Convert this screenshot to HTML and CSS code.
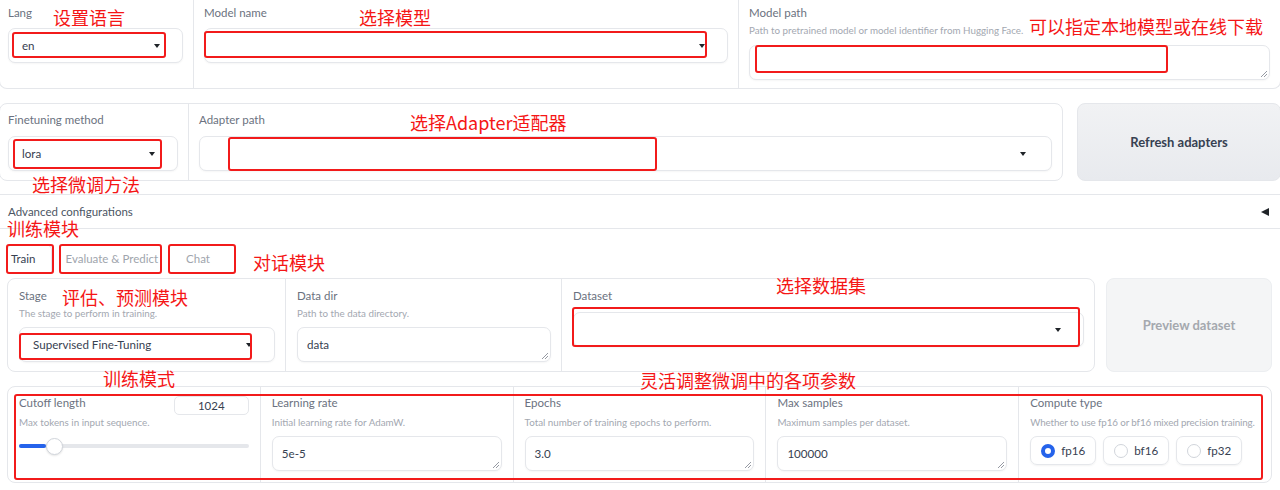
FILE: index.html
```html
<!DOCTYPE html>
<html lang="en">
<head>
<meta charset="utf-8">
<title>LLaMA Board</title>
<link rel="stylesheet" href="styles.css">
</head>
<body>
<div class="page">
  <div class="row1">
    <div class="cell c-lang">
      <div class="lbl">Lang</div>
      <div class="select"><span class="val">en</span><span class="arrow"></span></div>
    </div>
    <div class="cell c-mname">
      <div class="lbl">Model name</div>
      <div class="select"><span class="val"></span><span class="arrow"></span></div>
    </div>
    <div class="cell c-mpath">
      <div class="lbl">Model path</div>
      <div class="desc">Path to pretrained model or model identifier from Hugging Face.</div>
      <div class="textarea tall"><span class="val"></span><svg class="grip" width="7" height="7" viewBox="0 0 7 7"><path d="M7 1L1 7M7 4L4 7" stroke="#8a8f98" stroke-width="0.9"/></svg></div>
    </div>
  </div>

  <div class="row2">
    <div class="group g2">
      <div class="cell c-ft">
        <div class="lbl">Finetuning method</div>
        <div class="select"><span class="val">lora</span><span class="arrow"></span></div>
      </div>
      <div class="cell c-adapter">
        <div class="lbl">Adapter path</div>
        <div class="select wide-arrow"><span class="val"></span><span class="arrow"></span></div>
      </div>
    </div>
    <div class="btn btn-refresh">Refresh adapters</div>
  </div>

  <div class="accordion">
    <span>Advanced configurations</span>
    <span class="tri"></span>
  </div>

  <div class="tabs">
    <div class="tab active">Train</div>
    <div class="tab">Evaluate &amp; Predict</div>
    <div class="tab">Chat</div>
  </div>

  <div class="tabbody">
    <div class="row3">
      <div class="group g3">
        <div class="cell c-stage">
          <div class="lbl">Stage</div>
          <div class="desc">The stage to perform in training.</div>
          <div class="select"><span class="val">Supervised Fine-Tuning</span><span class="arrow"></span></div>
        </div>
        <div class="cell c-ddir">
          <div class="lbl">Data dir</div>
          <div class="desc">Path to the data directory.</div>
          <div class="textarea"><span class="val">data</span><svg class="grip" width="7" height="7" viewBox="0 0 7 7"><path d="M7 1L1 7M7 4L4 7" stroke="#8a8f98" stroke-width="0.9"/></svg></div>
        </div>
        <div class="cell c-dataset">
          <div class="lbl">Dataset</div>
          <div class="select ds"><span class="val"></span><span class="arrow"></span></div>
        </div>
      </div>
      <div class="btn btn-preview">Preview dataset</div>
    </div>

    <div class="group params">
      <div class="cell pc">
        <div class="lbl-row">
          <div class="lbl">Cutoff length</div>
          <div class="num">1024</div>
        </div>
        <div class="desc">Max tokens in input sequence.</div>
        <div class="slider">
          <div class="track"><div class="fill" style="width:27px"></div></div>
          <div class="thumb"></div>
        </div>
      </div>
      <div class="cell pc">
        <div class="lbl-row"><div class="lbl">Learning rate</div></div>
        <div class="desc">Initial learning rate for AdamW.</div>
        <div class="textarea"><span class="val">5e-5</span><svg class="grip" width="7" height="7" viewBox="0 0 7 7"><path d="M7 1L1 7M7 4L4 7" stroke="#8a8f98" stroke-width="0.9"/></svg></div>
      </div>
      <div class="cell pc">
        <div class="lbl-row"><div class="lbl">Epochs</div></div>
        <div class="desc">Total number of training epochs to perform.</div>
        <div class="textarea"><span class="val">3.0</span><svg class="grip" width="7" height="7" viewBox="0 0 7 7"><path d="M7 1L1 7M7 4L4 7" stroke="#8a8f98" stroke-width="0.9"/></svg></div>
      </div>
      <div class="cell pc">
        <div class="lbl-row"><div class="lbl">Max samples</div></div>
        <div class="desc">Maximum samples per dataset.</div>
        <div class="textarea"><span class="val">100000</span><svg class="grip" width="7" height="7" viewBox="0 0 7 7"><path d="M7 1L1 7M7 4L4 7" stroke="#8a8f98" stroke-width="0.9"/></svg></div>
      </div>
      <div class="cell pc">
        <div class="lbl-row"><div class="lbl">Compute type</div></div>
        <div class="desc tight">Whether to use fp16 or bf16 mixed precision training.</div>
        <div class="radios">
          <div class="radio"><span class="dot on"></span><span>fp16</span></div>
          <div class="radio"><span class="dot"></span><span>bf16</span></div>
          <div class="radio"><span class="dot"></span><span>fp32</span></div>
        </div>
      </div>
    </div>
  </div>

  <div class="annot">
    <div class="box b-lang"></div>
    <div class="box b-mname"></div>
    <div class="box b-mpath"></div>
    <div class="box b-ft"></div>
    <div class="box b-adapter"></div>
    <div class="box b-train"></div>
    <div class="box b-eval"></div>
    <div class="box b-chat"></div>
    <div class="box b-stage"></div>
    <div class="box b-dataset"></div>
    <div class="box b-params"></div>

    <div class="note n1">设置语言</div>
    <div class="note n2">选择模型</div>
    <div class="note n3">可以指定本地模型或在线下载</div>
    <div class="note n4">选择Adapter适配器</div>
    <div class="note n5">选择微调方法</div>
    <div class="note n6">训练模块</div>
    <div class="note n7">对话模块</div>
    <div class="note n8">评估、预测模块</div>
    <div class="note n9">训练模式</div>
    <div class="note n10">选择数据集</div>
    <div class="note n11">灵活调整微调中的各项参数</div>
  </div>
</div>
</body>
</html>
```

FILE: styles.css
```css
* { box-sizing: border-box; }

html, body {
  margin: 0;
  padding: 0;
  background: #ffffff;
}

body {
  width: 1280px;
  height: 490px;
  overflow: hidden;
  font-family: Lato, "Noto Sans", "Liberation Sans", sans-serif;
  color: #374151;
}

.page {
  position: relative;
  width: 1280px;
  height: 490px;
}

/* generic pieces */
.lbl {
  font-size: 11.5px;
  line-height: 16px;
  color: #6b7280;
  white-space: nowrap;
}

.desc {
  font-size: 9.8px;
  line-height: 14px;
  color: #a3a8b1;
  margin-top: 2px;
  white-space: nowrap;
}

.desc.tight { letter-spacing: -0.12px; }

.select,
.textarea {
  position: relative;
  height: 35px;
  border: 1px solid #e5e7eb;
  border-radius: 7px;
  background: #fff;
  box-shadow: 0 1px 2px rgba(0, 0, 0, 0.04);
  display: flex;
  align-items: center;
  font-size: 11.6px;
  color: #374151;
}

.select {
  justify-content: space-between;
  padding: 0 22px 0 13px;
}

.select.wide-arrow { padding-right: 25px; }

.textarea { padding: 0 9px; }

.arrow {
  width: 0;
  height: 0;
  border-left: 3.5px solid transparent;
  border-right: 3.5px solid transparent;
  border-top: 4px solid #1f2328;
}

.grip {
  position: absolute;
  right: 2px;
  bottom: 2px;
}

/* row 1 */
.row1 {
  display: flex;
  height: 89px;
  margin: 0 -1px;
  border: 1px solid #e5e7eb;
  border-top: none;
  border-radius: 0 0 8px 8px;
}

.cell {
  padding: 5px 10px 0 10px;
  min-width: 0;
}

.c-lang {
  width: 193px;
  padding-left: 8px;
}

.c-mname {
  width: 545px;
  border-left: 1px solid #e5e7eb;
}

.c-mname .lbl,
.c-lang .lbl { margin-bottom: 7px; }

.c-mpath {
  flex: 1;
  border-left: 1px solid #e5e7eb;
}

.c-mpath .textarea {
  margin-top: 8px;
}

/* row 2 */
.row2 {
  display: flex;
  gap: 14px;
  margin: 14px -1px 0 -1px;
  height: 78px;
}

.group {
  border: 1px solid #e5e7eb;
  border-radius: 8px;
  background: #fff;
  display: flex;
}

.g2 { width: 1064px; }

.g2 .cell { padding: 8px 10px 0 10px; }

.g2 .lbl { margin-bottom: 8px; }

.c-ft {
  width: 188px;
  padding-left: 8px !important;
}

.c-adapter {
  flex: 1;
  border-left: 1px solid #e5e7eb;
}

.btn {
  flex: 1;
  display: flex;
  align-items: center;
  justify-content: center;
  border: 1px solid #e5e7eb;
  border-radius: 8px;
  font-size: 13px;
  font-weight: 700;
}

.btn-refresh {
  background: linear-gradient(180deg, #f1f2f4, #e8eaee);
  color: #374151;
}

.btn-preview {
  background: #f4f5f6;
  color: #a4a8ae;
  border-color: #eceef1;
}

/* accordion */
.accordion {
  margin: 13px -1px 0 -1px;
  height: 35px;
  border: 1px solid #e5e7eb;
  display: flex;
  align-items: center;
  justify-content: space-between;
  padding: 0 11px 0 8px;
  font-size: 11.5px;
  color: #4b5563;
}

.tri {
  width: 0;
  height: 0;
  border-top: 4.5px solid transparent;
  border-bottom: 4.5px solid transparent;
  border-right: 8px solid #1f2328;
}

/* tabs */
.tabs {
  display: flex;
  margin-top: 15px;
  padding-left: 7px;
  height: 28px;
}

.tab {
  display: flex;
  align-items: center;
  padding: 0 13px;
  font-size: 11.5px;
  color: #a0a5ad;
  border: 1px solid transparent;
  border-bottom: none;
  border-radius: 6px 6px 0 0;
}

.tab.active {
  color: #374151;
  padding: 0 15px 0 3px;
  border-color: #e5e7eb;
}

/* tab body */
.tabbody {
  margin-top: 6px;
  padding: 0 8px 0 7px;
}

.row3 {
  display: flex;
  gap: 11px;
  height: 94px;
}

.g3 { width: 1088px; }

.g3 .cell { padding: 9px 10px 0 11px; }

.c-stage { width: 277px; }

.c-ddir {
  width: 276px;
  border-left: 1px solid #e5e7eb;
}

.c-dataset {
  flex: 1;
  border-left: 1px solid #e5e7eb;
}

.c-stage .select,
.c-ddir .textarea { margin-top: 7px; }

.select.ds { margin-top: 8px; }

/* params */
.params {
  margin-top: 14px;
  height: 97px;
}

.pc {
  flex: 1 1 0;
  padding: 8px 11px 0 11px;
}

.pc + .pc { border-left: 1px solid #e5e7eb; }

.lbl-row {
  display: flex;
  justify-content: space-between;
  align-items: flex-start;
  height: 20px;
}

.pc .desc { margin-top: 0; }

.pc .textarea { margin-top: 7px; }

.num {
  width: 75px;
  height: 19px;
  margin-top: 1px;
  border: 1px solid #e5e7eb;
  border-radius: 5px;
  font-size: 11.5px;
  color: #374151;
  display: flex;
  align-items: center;
  justify-content: center;
}

.slider {
  position: relative;
  margin-top: 9px;
  height: 16px;
  display: flex;
  align-items: center;
}

.track {
  width: 100%;
  height: 4px;
  border-radius: 2px;
  background: #e5e7eb;
}

.fill {
  height: 4px;
  border-radius: 2px;
  background: #2563eb;
}

.thumb {
  position: absolute;
  left: 27px;
  top: 0;
  width: 17px;
  height: 17px;
  border-radius: 50%;
  background: #fff;
  border: 1px solid #d1d5db;
  box-shadow: 0 1px 2px rgba(0, 0, 0, 0.1);
}

.radios {
  display: flex;
  gap: 7px;
  margin-top: 7px;
}

.radio {
  display: flex;
  align-items: center;
  gap: 6px;
  height: 29px;
  padding: 0 10px 0 10px;
  border: 1px solid #e5e7eb;
  border-radius: 7px;
  box-shadow: 0 1px 2px rgba(0, 0, 0, 0.05);
  font-size: 11.6px;
  color: #374151;
}

.dot {
  width: 14px;
  height: 14px;
  border-radius: 50%;
  border: 1px solid #d1d5db;
  background: #fff;
}

.dot.on {
  border: 4px solid #2563eb;
  background: #fff;
}

/* annotation overlay */
.annot {
  position: absolute;
  inset: 0;
  pointer-events: none;
}

.box {
  position: absolute;
  border: 2px solid #f21b1b;
  border-radius: 3px;
}

.b-lang { left: 12px; top: 32px; width: 154px; height: 26px; }
.b-mname { left: 204px; top: 31px; width: 503px; height: 27px; }
.b-mpath { left: 755px; top: 45px; width: 413px; height: 28px; }
.b-ft { left: 13px; top: 139px; width: 149px; height: 30px; }
.b-adapter { left: 228px; top: 137px; width: 429px; height: 34px; }
.b-train { left: 6px; top: 244px; width: 48px; height: 30px; }
.b-eval { left: 59px; top: 244px; width: 103px; height: 30px; }
.b-chat { left: 168px; top: 244px; width: 68px; height: 30px; }
.b-stage { left: 19px; top: 333px; width: 233px; height: 27px; }
.b-dataset { left: 572px; top: 307px; width: 508px; height: 40px; }
.b-params { left: 14px; top: 394px; width: 1249px; height: 86px; }

.note {
  position: absolute;
  font-family: "Noto Sans CJK SC", "Noto Sans", sans-serif;
  font-size: 18px;
  line-height: 18px;
  color: #f51616;
  white-space: nowrap;
}

.n1 { left: 53px; top: 8px; }
.n2 { left: 359px; top: 8px; }
.n3 { left: 1029px; top: 17px; }
.n4 { left: 410px; top: 113px; }
.n5 { left: 32px; top: 175px; }
.n6 { left: 7px; top: 219px; }
.n7 { left: 253px; top: 253px; }
.n8 { left: 62px; top: 288px; }
.n9 { left: 103px; top: 369px; }
.n10 { left: 776px; top: 276px; }
.n11 { left: 640px; top: 371px; }
```
